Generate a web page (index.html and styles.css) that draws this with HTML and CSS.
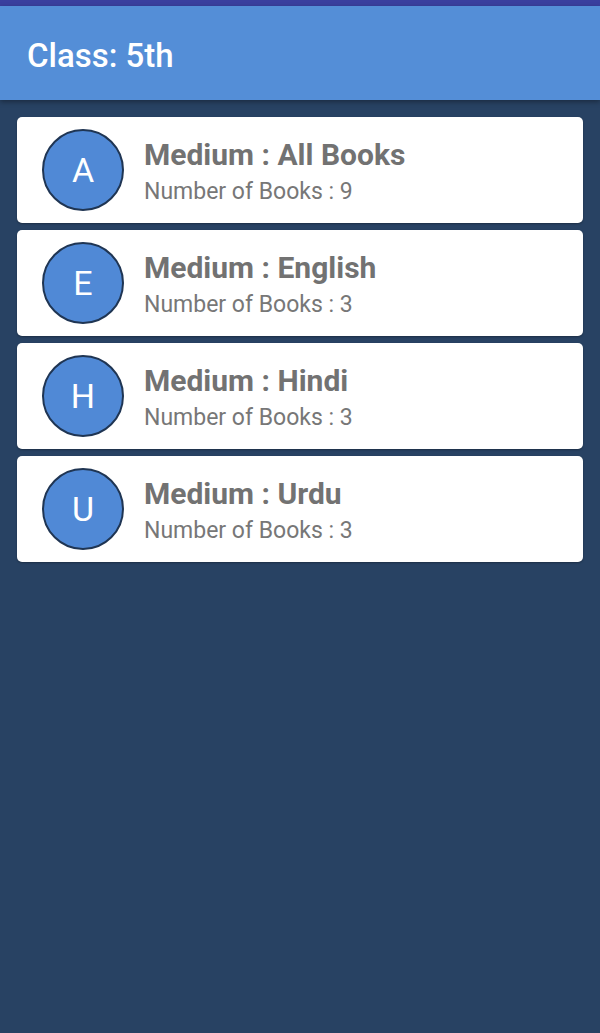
FILE: index.html
```html
<!DOCTYPE html>
<html lang="en">
<head>
    <meta charset="UTF-8">
    <meta name="viewport" content="width=device-width, initial-scale=1.0">
    <title>Class: 5th</title>
    <link rel="stylesheet" href="styles.css">
</head>
<body>
    <div class="status-bar"></div>
    <header class="app-bar">Class: 5th</header>
    <div class="list">
        <div class="card">
            <div class="avatar">A</div>
            <div class="info">
                <div class="title">Medium : All Books</div>
                <div class="count">Number of Books : 9</div>
            </div>
        </div>
        <div class="card">
            <div class="avatar">E</div>
            <div class="info">
                <div class="title">Medium : English</div>
                <div class="count">Number of Books : 3</div>
            </div>
        </div>
        <div class="card">
            <div class="avatar">H</div>
            <div class="info">
                <div class="title">Medium : Hindi</div>
                <div class="count">Number of Books : 3</div>
            </div>
        </div>
        <div class="card">
            <div class="avatar">U</div>
            <div class="info">
                <div class="title">Medium : Urdu</div>
                <div class="count">Number of Books : 3</div>
            </div>
        </div>
    </div>
</body>
</html>
```

FILE: styles.css
```css
html, body {
    height: 100%;
}
body {
    font-family: Roboto, "Liberation Sans", Arial, sans-serif;
    margin: 0;
    padding: 0;
    background: #284263;
}
.status-bar {
    height: 6px;
    background: #3a3f9e;
}
.app-bar {
    position: relative;
    height: 94px;
    box-sizing: border-box;
    display: flex;
    align-items: center;
    padding-left: 27px;
    padding-top: 4px;
    background: #548ed7;
    color: #fff;
    font-size: 33px;
    font-weight: 500;
    box-shadow: 0 2px 5px rgba(0, 0, 0, 0.35);
}
.list {
    padding: 17px 17px;
    display: flex;
    flex-direction: column;
    gap: 7px;
}
.card {
    height: 106px;
    background: #fff;
    border-radius: 5px;
    display: flex;
    align-items: center;
    padding-left: 25px;
    box-shadow: 0 1px 2px rgba(0, 0, 0, 0.3);
}
.avatar {
    width: 78px;
    height: 78px;
    border-radius: 50%;
    background: #5089d6;
    border: 2px solid #1f3553;
    color: #fff;
    font-size: 34px;
    display: flex;
    align-items: center;
    justify-content: center;
    flex-shrink: 0;
}
.info {
    margin-left: 20px;
    padding-top: 5px;
}
.title {
    font-size: 30px;
    font-weight: bold;
    color: #727272;
    line-height: 34px;
}
.count {
    font-size: 23px;
    color: #777;
    line-height: 30px;
    margin-top: 5px;
}
```
